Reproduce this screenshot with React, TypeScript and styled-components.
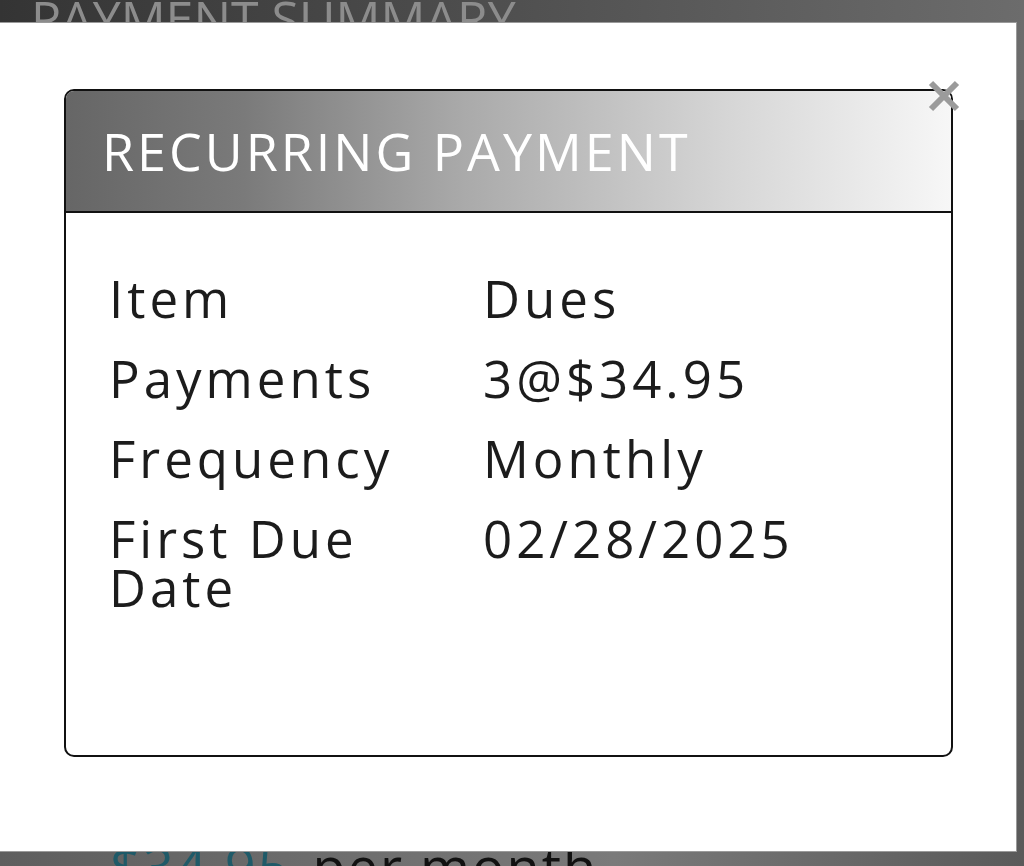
import React from 'react'
import styled, { createGlobalStyle } from 'styled-components'

const GlobalStyle = createGlobalStyle`
    html, body {
        margin: 0;
        padding: 0;
        background: #6f6f6f;
        font-family: "Open Sans", "Noto Sans", sans-serif;
    }
`

const rows = [
    { label: 'Item', value: 'Dues' },
    { label: 'Payments', value: '3@$34.95' },
    { label: 'Frequency', value: 'Monthly' },
    { label: 'First Due Date', value: '02/28/2025' },
]

const App: React.FC = () => {
    return (
        <Page>
            <GlobalStyle />
            <Backdrop>
                <SummaryBar>
                    <SummaryTitle>PAYMENT SUMMARY</SummaryTitle>
                </SummaryBar>
                <SummaryBody>
                    <Price>$34.95</Price>
                    <PriceUnit>per month</PriceUnit>
                </SummaryBody>
            </Backdrop>
            <Modal>
                <Close aria-label="close">
                    <svg width="32" height="32" viewBox="0 0 32 32">
                        <path d="M3 3 L29 29 M29 3 L3 29" stroke="#9b9b9b" strokeWidth="6" strokeLinecap="butt" />
                    </svg>
                </Close>
                <Card>
                    <CardHeader>
                        <CardTitle>RECURRING PAYMENT</CardTitle>
                    </CardHeader>
                    <CardBody>
                        {rows.map((r) => (
                            <Row key={r.label}>
                                <Label>{r.label}</Label>
                                <Value>{r.value}</Value>
                            </Row>
                        ))}
                    </CardBody>
                </Card>
            </Modal>
        </Page>
    )
}

const Page = styled.div`
    position: relative;
    width: 1024px;
    height: 866px;
    overflow: hidden;
    background: linear-gradient(90deg, #5e5e5e 0%, #7a7a7a 60%, #5a5a5a 100%);
`
const Backdrop = styled.div`
    display: flex;
    flex-direction: column;
    height: 100%;
`
const SummaryBar = styled.div`
    height: 120px;
    padding-left: 31px;
    background: linear-gradient(90deg, #343434 0%, #4a4a4a 40%, #6c6c6c 100%);
    box-sizing: border-box;
`
const SummaryTitle = styled.div`
    margin-top: -16px;
    font-size: 50px;
    line-height: 68px;
    color: #8c8c8c;
    white-space: nowrap;
`
const SummaryBody = styled.div`
    flex: 1;
    display: flex;
    align-items: flex-end;
    gap: 22px;
    padding-left: 110px;
    margin-bottom: -30px;
`
const Price = styled.span`
    font-size: 54px;
    line-height: 60px;
    color: #1f5a68;
    letter-spacing: 2px;
`
const PriceUnit = styled.span`
    font-size: 54px;
    line-height: 60px;
    color: #111;
    letter-spacing: 2px;
`
const Modal = styled.div`
    position: absolute;
    left: -1px;
    top: 22px;
    width: 1018px;
    height: 830px;
    box-sizing: border-box;
    background: #ffffff;
    border: 1px solid #9a9a9a;
    border-left: none;
    padding: 66px 0 0 65px;
`
const Close = styled.button`
    position: absolute;
    left: 929px;
    top: 57px;
    width: 32px;
    height: 32px;
    padding: 0;
    border: none;
    background: transparent;
    cursor: pointer;
    z-index: 2;
    svg {
        display: block;
    }
`
const Card = styled.div`
    width: 889px;
    height: 668px;
    box-sizing: border-box;
    border: 2px solid #111;
    border-radius: 10px;
    overflow: hidden;
    display: flex;
    flex-direction: column;
`
const CardHeader = styled.div`
    height: 122px;
    flex-shrink: 0;
    box-sizing: border-box;
    display: flex;
    align-items: center;
    padding-left: 36px;
    background: linear-gradient(90deg, #666666 0%, #7a7a7a 20%, #aaaaaa 45%, #d6d6d6 75%, #f7f7f7 100%);
    border-bottom: 2px solid #111;
`
const CardTitle = styled.h2`
    margin: 0;
    font-size: 52px;
    font-weight: 400;
    line-height: 60px;
    letter-spacing: 3px;
    color: #ffffff;
    white-space: nowrap;
`
const CardBody = styled.div`
    display: flex;
    flex-direction: column;
    gap: 31px;
    padding: 61px 0 0 43px;
`
const Row = styled.div`
    display: grid;
    grid-template-columns: 374px 1fr;
`
const Label = styled.div`
    font-size: 51px;
    line-height: 49px;
    letter-spacing: 4px;
    color: #1c1c1c;
    padding-right: 20px;
`
const Value = styled.div`
    font-size: 51px;
    line-height: 49px;
    letter-spacing: 4px;
    color: #1c1c1c;
`

export default App
